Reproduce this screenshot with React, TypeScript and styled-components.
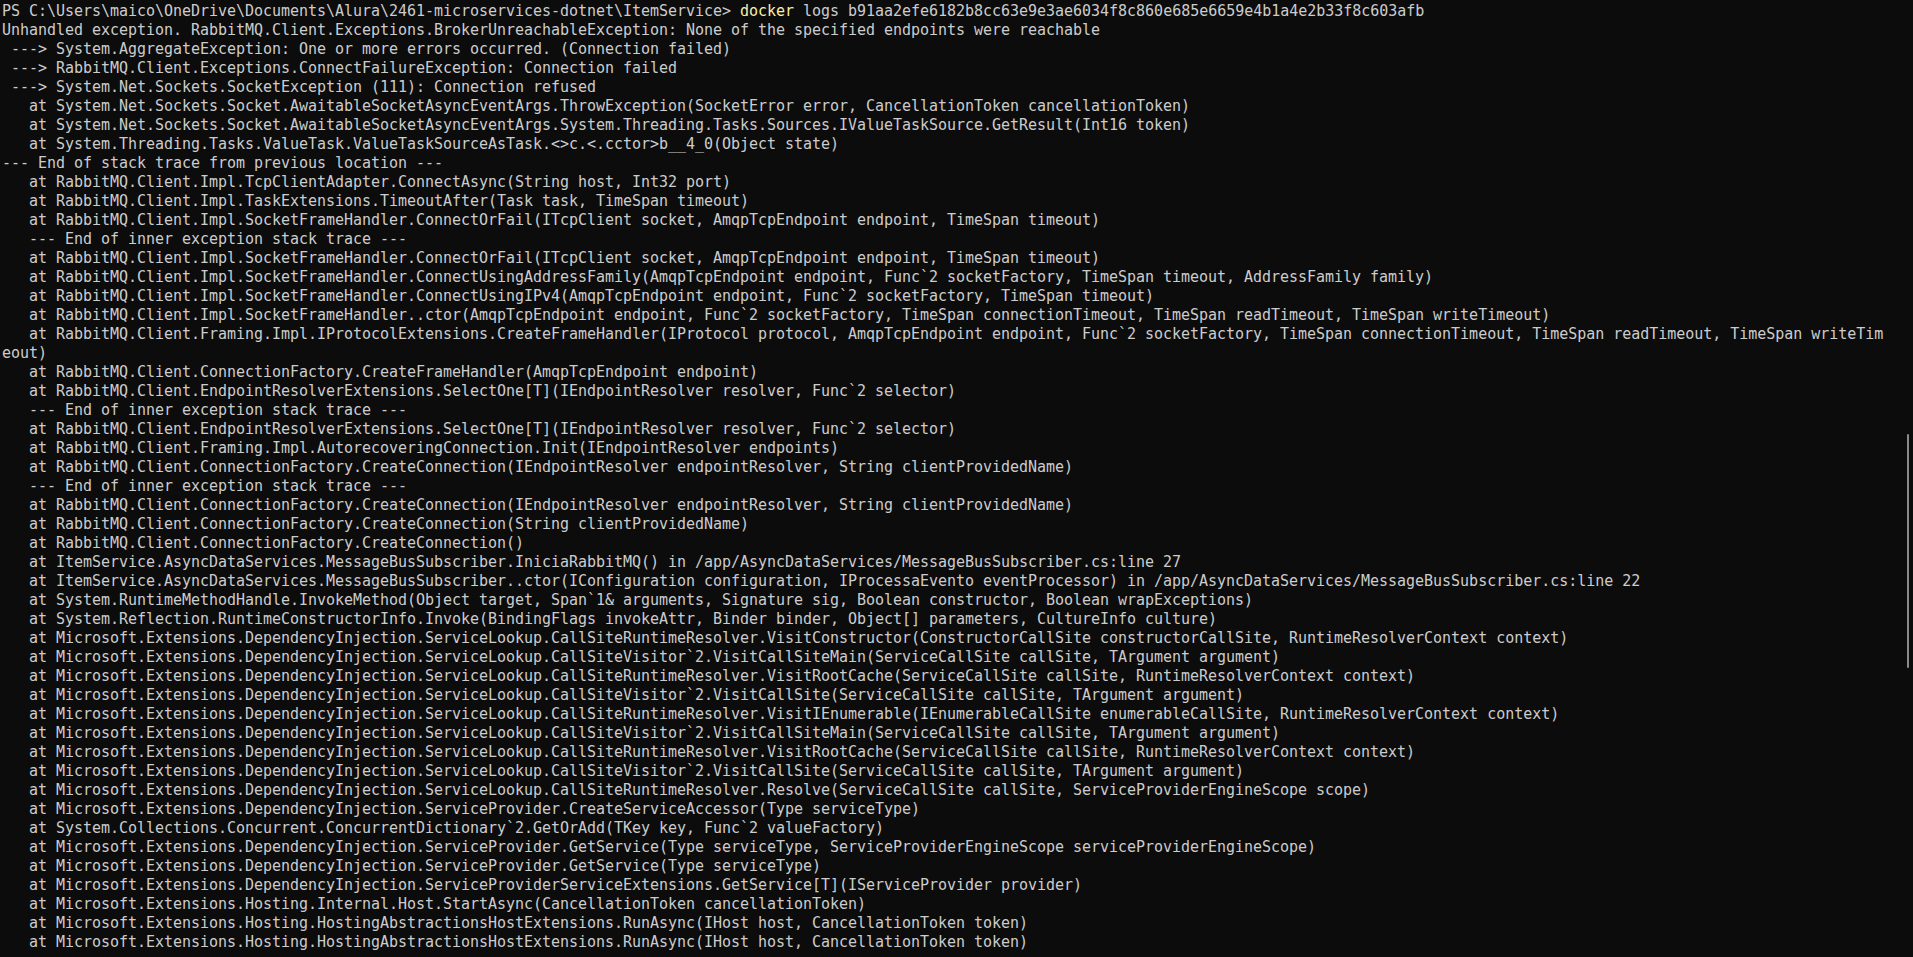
import React from 'react';
import styled, { createGlobalStyle } from 'styled-components';

const GlobalStyle = createGlobalStyle`
  html, body {
    margin: 0;
    padding: 0;
    background: #0c0c0c;
    overflow: hidden;
  }
`;

const Screen = styled.div`
  position: relative;
  width: 100vw;
  height: 100vh;
  background: #0c0c0c;
  overflow: hidden;
`;

const Output = styled.div`
  display: flex;
  flex-direction: column;
  padding: 2px 0 0 2px;
  font-family: 'DejaVu Sans Mono', 'Liberation Mono', monospace;
  font-size: 15px;
  letter-spacing: -0.03px;
  line-height: 19px;
  color: #cccccc;
`;

const Line = styled.div`
  white-space: pre;
  height: 19px;
`;

const Command = styled.span`
  color: #f9f1a5;
`;

const ScrollThumb = styled.div`
  position: absolute;
  right: 4px;
  top: 434px;
  width: 2px;
  height: 234px;
  background: #8a8a8a;
  border-radius: 1px;
`;

// stack trace exactly as it came out of the terminal (line 18 wraps at column 209)
const trace: string[] = [
  'Unhandled exception. RabbitMQ.Client.Exceptions.BrokerUnreachableException: None of the specified endpoints were reachable',
  ' ---> System.AggregateException: One or more errors occurred. (Connection failed)',
  ' ---> RabbitMQ.Client.Exceptions.ConnectFailureException: Connection failed',
  ' ---> System.Net.Sockets.SocketException (111): Connection refused',
  '   at System.Net.Sockets.Socket.AwaitableSocketAsyncEventArgs.ThrowException(SocketError error, CancellationToken cancellationToken)',
  '   at System.Net.Sockets.Socket.AwaitableSocketAsyncEventArgs.System.Threading.Tasks.Sources.IValueTaskSource.GetResult(Int16 token)',
  '   at System.Threading.Tasks.ValueTask.ValueTaskSourceAsTask.<>c.<.cctor>b__4_0(Object state)',
  '--- End of stack trace from previous location ---',
  '   at RabbitMQ.Client.Impl.TcpClientAdapter.ConnectAsync(String host, Int32 port)',
  '   at RabbitMQ.Client.Impl.TaskExtensions.TimeoutAfter(Task task, TimeSpan timeout)',
  '   at RabbitMQ.Client.Impl.SocketFrameHandler.ConnectOrFail(ITcpClient socket, AmqpTcpEndpoint endpoint, TimeSpan timeout)',
  '   --- End of inner exception stack trace ---',
  '   at RabbitMQ.Client.Impl.SocketFrameHandler.ConnectOrFail(ITcpClient socket, AmqpTcpEndpoint endpoint, TimeSpan timeout)',
  '   at RabbitMQ.Client.Impl.SocketFrameHandler.ConnectUsingAddressFamily(AmqpTcpEndpoint endpoint, Func`2 socketFactory, TimeSpan timeout, AddressFamily family)',
  '   at RabbitMQ.Client.Impl.SocketFrameHandler.ConnectUsingIPv4(AmqpTcpEndpoint endpoint, Func`2 socketFactory, TimeSpan timeout)',
  '   at RabbitMQ.Client.Impl.SocketFrameHandler..ctor(AmqpTcpEndpoint endpoint, Func`2 socketFactory, TimeSpan connectionTimeout, TimeSpan readTimeout, TimeSpan writeTimeout)',
  '   at RabbitMQ.Client.Framing.Impl.IProtocolExtensions.CreateFrameHandler(IProtocol protocol, AmqpTcpEndpoint endpoint, Func`2 socketFactory, TimeSpan connectionTimeout, TimeSpan readTimeout, TimeSpan writeTim',
  'eout)',
  '   at RabbitMQ.Client.ConnectionFactory.CreateFrameHandler(AmqpTcpEndpoint endpoint)',
  '   at RabbitMQ.Client.EndpointResolverExtensions.SelectOne[T](IEndpointResolver resolver, Func`2 selector)',
  '   --- End of inner exception stack trace ---',
  '   at RabbitMQ.Client.EndpointResolverExtensions.SelectOne[T](IEndpointResolver resolver, Func`2 selector)',
  '   at RabbitMQ.Client.Framing.Impl.AutorecoveringConnection.Init(IEndpointResolver endpoints)',
  '   at RabbitMQ.Client.ConnectionFactory.CreateConnection(IEndpointResolver endpointResolver, String clientProvidedName)',
  '   --- End of inner exception stack trace ---',
  '   at RabbitMQ.Client.ConnectionFactory.CreateConnection(IEndpointResolver endpointResolver, String clientProvidedName)',
  '   at RabbitMQ.Client.ConnectionFactory.CreateConnection(String clientProvidedName)',
  '   at RabbitMQ.Client.ConnectionFactory.CreateConnection()',
  '   at ItemService.AsyncDataServices.MessageBusSubscriber.IniciaRabbitMQ() in /app/AsyncDataServices/MessageBusSubscriber.cs:line 27',
  '   at ItemService.AsyncDataServices.MessageBusSubscriber..ctor(IConfiguration configuration, IProcessaEvento eventProcessor) in /app/AsyncDataServices/MessageBusSubscriber.cs:line 22',
  '   at System.RuntimeMethodHandle.InvokeMethod(Object target, Span`1& arguments, Signature sig, Boolean constructor, Boolean wrapExceptions)',
  '   at System.Reflection.RuntimeConstructorInfo.Invoke(BindingFlags invokeAttr, Binder binder, Object[] parameters, CultureInfo culture)',
  '   at Microsoft.Extensions.DependencyInjection.ServiceLookup.CallSiteRuntimeResolver.VisitConstructor(ConstructorCallSite constructorCallSite, RuntimeResolverContext context)',
  '   at Microsoft.Extensions.DependencyInjection.ServiceLookup.CallSiteVisitor`2.VisitCallSiteMain(ServiceCallSite callSite, TArgument argument)',
  '   at Microsoft.Extensions.DependencyInjection.ServiceLookup.CallSiteRuntimeResolver.VisitRootCache(ServiceCallSite callSite, RuntimeResolverContext context)',
  '   at Microsoft.Extensions.DependencyInjection.ServiceLookup.CallSiteVisitor`2.VisitCallSite(ServiceCallSite callSite, TArgument argument)',
  '   at Microsoft.Extensions.DependencyInjection.ServiceLookup.CallSiteRuntimeResolver.VisitIEnumerable(IEnumerableCallSite enumerableCallSite, RuntimeResolverContext context)',
  '   at Microsoft.Extensions.DependencyInjection.ServiceLookup.CallSiteVisitor`2.VisitCallSiteMain(ServiceCallSite callSite, TArgument argument)',
  '   at Microsoft.Extensions.DependencyInjection.ServiceLookup.CallSiteRuntimeResolver.VisitRootCache(ServiceCallSite callSite, RuntimeResolverContext context)',
  '   at Microsoft.Extensions.DependencyInjection.ServiceLookup.CallSiteVisitor`2.VisitCallSite(ServiceCallSite callSite, TArgument argument)',
  '   at Microsoft.Extensions.DependencyInjection.ServiceLookup.CallSiteRuntimeResolver.Resolve(ServiceCallSite callSite, ServiceProviderEngineScope scope)',
  '   at Microsoft.Extensions.DependencyInjection.ServiceProvider.CreateServiceAccessor(Type serviceType)',
  '   at System.Collections.Concurrent.ConcurrentDictionary`2.GetOrAdd(TKey key, Func`2 valueFactory)',
  '   at Microsoft.Extensions.DependencyInjection.ServiceProvider.GetService(Type serviceType, ServiceProviderEngineScope serviceProviderEngineScope)',
  '   at Microsoft.Extensions.DependencyInjection.ServiceProvider.GetService(Type serviceType)',
  '   at Microsoft.Extensions.DependencyInjection.ServiceProviderServiceExtensions.GetService[T](IServiceProvider provider)',
  '   at Microsoft.Extensions.Hosting.Internal.Host.StartAsync(CancellationToken cancellationToken)',
  '   at Microsoft.Extensions.Hosting.HostingAbstractionsHostExtensions.RunAsync(IHost host, CancellationToken token)',
  '   at Microsoft.Extensions.Hosting.HostingAbstractionsHostExtensions.RunAsync(IHost host, CancellationToken token)',
];

const prompt = 'PS C:\\Users\\maico\\OneDrive\\Documents\\Alura\\2461-microservices-dotnet\\ItemService> ';

const App: React.FC = () => {
  return (
    <>
      <GlobalStyle />
      <Screen>
        <Output>
          <Line>
            {prompt}
            <Command>docker</Command>
            {' logs b91aa2efe6182b8cc63e9e3ae6034f8c860e685e6659e4b1a4e2b33f8c603afb'}
          </Line>
          {trace.map((text, i) => (
            <Line key={i}>{text}</Line>
          ))}
        </Output>
        <ScrollThumb />
      </Screen>
    </>
  );
};

export default App;
